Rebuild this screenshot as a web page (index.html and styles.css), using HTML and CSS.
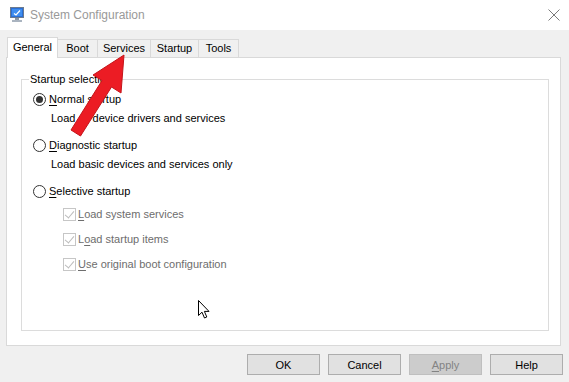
FILE: index.html
```html
<!DOCTYPE html>
<html lang="en">

<head>
    <meta charset="UTF-8" />
    <title>System Configuration</title>
    <link rel="stylesheet" href="styles.css">
</head>

<body>
    <div class="window">
        <header class="titlebar">
            <svg class="app-icon" width="14" height="15" viewBox="0 0 14 15" aria-hidden="true">
                <rect x="0.5" y="0.5" width="13" height="10" fill="#2b6fd6" stroke="#6b7b90" />
                <rect x="2" y="2" width="10" height="7" fill="#3f8ef0" />
                <path d="M4 6.5 L6 8 L10 3.5" stroke="#ffffff" stroke-width="1.2" fill="none" />
                <rect x="5" y="11" width="4" height="2" fill="#8a96a6" />
                <rect x="2" y="13" width="10" height="2" fill="#aab4c0" />
            </svg>
            <span class="title">System Configuration</span>
            <svg class="close" width="12" height="12" viewBox="0 0 12 12" aria-label="Close">
                <path d="M0.5 0.5 L11.5 11.5 M11.5 0.5 L0.5 11.5" stroke="#7a7a7a" stroke-width="1" />
            </svg>
        </header>

        <main class="content">
            <nav class="tabs">
                <span class="tab tab-general active">General</span>
                <span class="tab tab-boot">Boot</span>
                <span class="tab tab-services">Services</span>
                <span class="tab tab-startup">Startup</span>
                <span class="tab tab-tools">Tools</span>
            </nav>

            <section class="panel">
                <fieldset class="group">
                    <legend>Startup selection</legend>

                    <div class="option">
                        <span class="radio checked"></span>
                        <span><u>N</u>ormal startup</span>
                    </div>
                    <div class="desc">Load all device drivers and services</div>

                    <div class="option">
                        <span class="radio"></span>
                        <span><u>D</u>iagnostic startup</span>
                    </div>
                    <div class="desc">Load basic devices and services only</div>

                    <div class="option">
                        <span class="radio"></span>
                        <span><u>S</u>elective startup</span>
                    </div>

                    <div class="check-row">
                        <span class="checkbox"></span>
                        <span><u>L</u>oad system services</span>
                    </div>
                    <div class="check-row">
                        <span class="checkbox"></span>
                        <span>L<u>o</u>ad startup items</span>
                    </div>
                    <div class="check-row">
                        <span class="checkbox"></span>
                        <span><u>U</u>se original boot configuration</span>
                    </div>
                </fieldset>
            </section>

            <div class="buttons">
                <button type="button" class="btn">OK</button>
                <button type="button" class="btn">Cancel</button>
                <button type="button" class="btn" disabled><u>A</u>pply</button>
                <button type="button" class="btn">Help</button>
            </div>
        </main>

        <!-- annotation arrow drawn over the dialog -->
        <svg class="arrow" width="569" height="382" viewBox="0 0 569 382" aria-hidden="true">
            <polygon points="124,55 121,93 111.5,87 80.5,136 71,130 102,80.5 93,75"
                     fill="#ec1c24" stroke="#c4141a" stroke-width="1" stroke-linejoin="round" />
        </svg>

        <svg class="cursor" width="14" height="20" viewBox="0 0 14 20" aria-hidden="true">
            <path d="M0.5 0.5 L0.5 15.5 L4 12.2 L6.5 18 L8.8 17 L6.4 11.4 L11 11.4 Z"
                  fill="#ffffff" stroke="#000000" stroke-width="1" stroke-linejoin="round" />
        </svg>
    </div>
</body>

</html>
```

FILE: styles.css
```css
body {
    margin: 0;
    font-family: "Liberation Sans", Arial, sans-serif;
    font-size: 11px;
    color: #000;
}

.window {
    position: relative;
    width: 569px;
    height: 382px;
    background: #f0f0f0;
    overflow: hidden;
}

.titlebar {
    height: 30px;
    background: #fff;
    display: flex;
    align-items: center;
    padding: 0 9px 0 10px;
    box-sizing: border-box;
}

.app-icon {
    margin-right: 6px;
    margin-top: -1px;
}

.title {
    flex: 1;
    font-size: 12px;
    color: #999;
    margin-top: -1px;
}

.content {
    padding: 7px 7px 0 6px;
}

/* tabs */
.tabs {
    display: flex;
    align-items: flex-end;
    height: 20px;
    padding-left: 1px;
}

.tab {
    height: 18px;
    line-height: 17px;
    text-align: center;
    border: 1px solid #d9d9d9;
    border-bottom: none;
    border-left: none;
    box-sizing: border-box;
    background: #f0f0f0;
}

.tab.active {
    height: 21px;
    line-height: 19px;
    margin-bottom: -1px;
    border-left: 1px solid #d9d9d9;
    background: #fff;
    position: relative;
    z-index: 1;
}

.tab-general { width: 51px; }
.tab-boot { width: 40px; }
.tab-services { width: 53px; }
.tab-startup { width: 48px; }
.tab-tools { width: 40px; }

.panel {
    width: 555px;
    height: 289px;
    box-sizing: border-box;
    background: #fff;
    border: 1px solid #d9d9d9;
    display: flex;
    flex-direction: column;
    padding: 14px 11px 14px 14px;
}

/* group box */
.group {
    flex: 1;
    margin: 0;
    border: 1px solid #dcdcdc;
    padding: 5px 0 0 11px;
    min-width: 0;
}

.group legend {
    padding: 0 1px;
    margin-left: -4px;
    line-height: 14px;
}

.option,
.check-row {
    display: flex;
    align-items: center;
    height: 16px;
    line-height: 16px;
}

.option {
    margin-top: 11px;
}

.option:first-of-type {
    margin-top: 0;
}

.desc {
    height: 16px;
    line-height: 16px;
    padding-left: 18px;
    margin-top: 3px;
}

.check-row {
    margin-top: 9px;
    padding-left: 30px;
    color: #6d6d6d;
}

.option + .check-row {
    margin-top: 7px;
}

.radio {
    width: 13px;
    height: 13px;
    box-sizing: border-box;
    border: 1px solid #333;
    border-radius: 50%;
    margin-right: 3px;
    position: relative;
}

.radio.checked::after {
    content: "";
    position: absolute;
    left: 2px;
    top: 2px;
    width: 7px;
    height: 7px;
    border-radius: 50%;
    background: #333;
}

.checkbox {
    width: 13px;
    height: 13px;
    box-sizing: border-box;
    border: 1px solid #c6c6c6;
    margin-right: 2px;
    position: relative;
}

.checkbox::after {
    content: "";
    position: absolute;
    left: 3px;
    top: 0px;
    width: 4px;
    height: 8px;
    border: solid #bcbcbc;
    border-width: 0 1px 1px 0;
    transform: rotate(40deg);
}

u {
    text-decoration-thickness: 1px;
    text-underline-offset: 2px;
}

/* bottom buttons */
.buttons {
    display: flex;
    justify-content: flex-end;
    gap: 8px;
    margin-top: 8px;
    margin-right: -1px;
}

.btn {
    width: 73px;
    height: 21px;
    padding: 0;
    font-family: inherit;
    font-size: 11px;
    color: #000;
    background: #e1e1e1;
    border: 1px solid #adadad;
    box-sizing: border-box;
}

.btn:disabled {
    background: #cccccc;
    border-color: #bfbfbf;
    color: #838383;
}

.arrow {
    position: absolute;
    left: 0;
    top: 0;
    pointer-events: none;
}

.cursor {
    position: absolute;
    left: 198px;
    top: 300px;
}
```
